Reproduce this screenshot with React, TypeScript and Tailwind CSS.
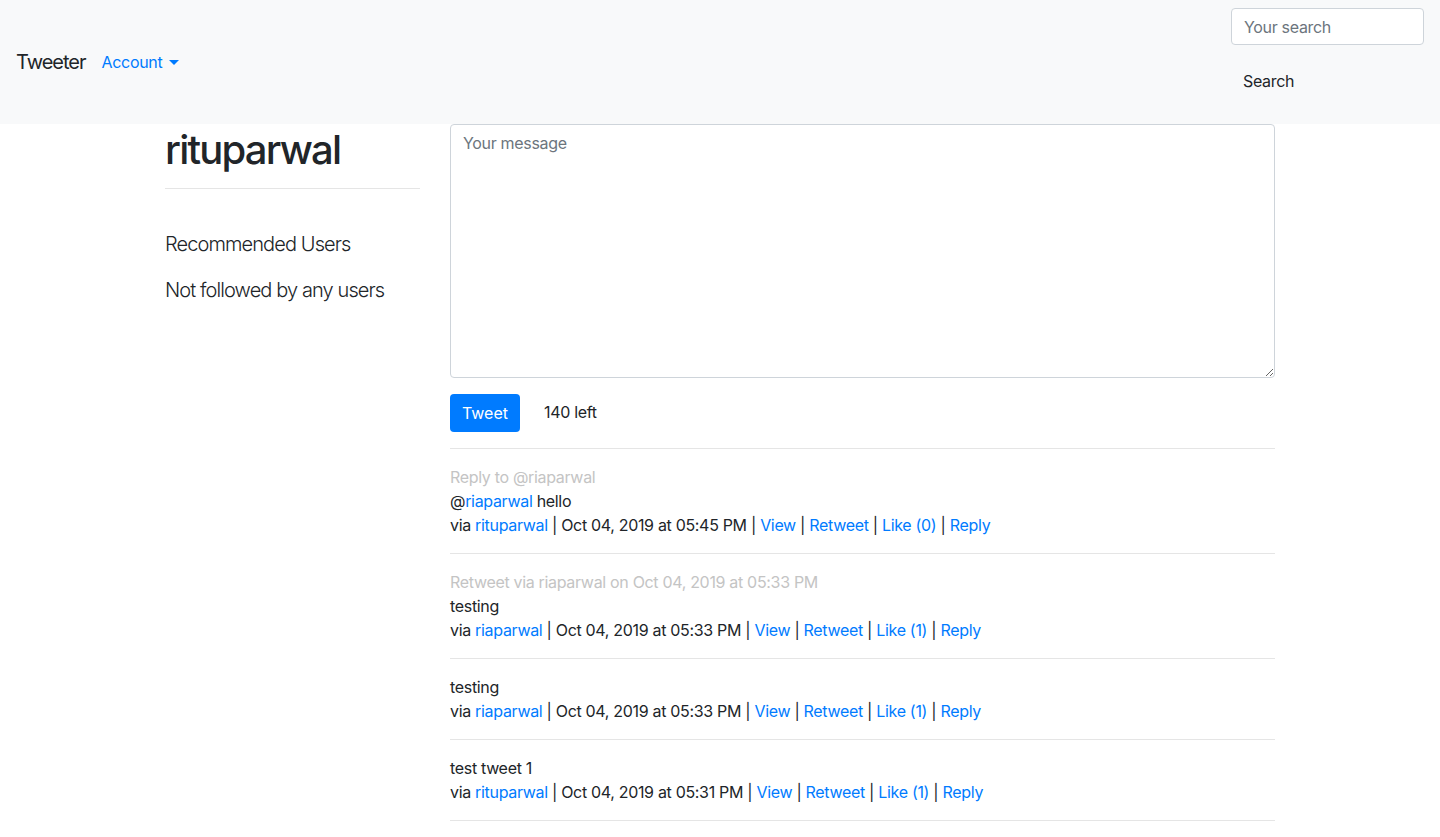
const tweets = [
  {
    note: 'Reply to @riaparwal',
    mention: 'riaparwal',
    body: ' hello',
    user: 'rituparwal',
    date: 'Oct 04, 2019 at 05:45 PM',
    likes: 0,
  },
  {
    note: 'Retweet via riaparwal on Oct 04, 2019 at 05:33 PM',
    body: 'testing',
    user: 'riaparwal',
    date: 'Oct 04, 2019 at 05:33 PM',
    likes: 1,
  },
  { body: 'testing', user: 'riaparwal', date: 'Oct 04, 2019 at 05:33 PM', likes: 1 },
  { body: 'test tweet 1', user: 'rituparwal', date: 'Oct 04, 2019 at 05:31 PM', likes: 1 },
];

const Link = ({ children }: { children: React.ReactNode }) => (
  <a href="#" className="text-[#007bff] hover:underline">
    {children}
  </a>
);

export default function App() {
  return (
    <div
      className="min-h-screen bg-white text-[#212529] text-base leading-6 tracking-[-0.02em]"
      style={{ fontFamily: 'Inter, "Liberation Sans", sans-serif' }}
    >
      <nav className="h-[124px] bg-[#f8f9fa] px-4 flex items-center justify-between">
        <div className="flex items-center">
          <a href="#" className="text-[20px] leading-[30px] mr-4 text-[#212529] tracking-[-0.05em]">
            Tweeter
          </a>
          <a href="#" className="text-[#007bff] flex items-center gap-[7px]">
            Account
            <span className="inline-block w-0 h-0 border-l-[5px] border-r-[5px] border-t-[5px] border-l-transparent border-r-transparent border-t-[#007bff]" />
          </a>
        </div>
        <form className="flex flex-col self-start pt-2">
          <input
            placeholder="Your search"
            className="w-[193px] h-[37px] px-3 rounded border border-[#ced4da] bg-white placeholder:text-[#6c757d] outline-none"
          />
          <button type="button" className="text-left px-3 h-[38px] mt-[17px]">
            Search
          </button>
        </form>
      </nav>

      <div className="w-[1140px] mx-auto px-[15px] flex">
        <aside className="w-[255px] shrink-0">
          <h1 className="text-[40px] font-medium leading-[48px] mt-[2px] tracking-[-0.045em]">rituparwal</h1>
          <hr className="border-t border-[#e5e5e5] mt-[14px] mb-[40px]" />
          <p className="text-[20px] font-light leading-[30px] mb-4 tracking-[-0.045em]">Recommended Users</p>
          <p className="text-[20px] font-light leading-[30px] tracking-[-0.045em]">Not followed by any users</p>
        </aside>

        <main className="ml-[30px] w-[825px]">
          <textarea
            placeholder="Your message"
            className="block w-full h-[254px] px-3 py-[6px] rounded border border-[#ced4da] placeholder:text-[#6c757d] outline-none resize-y"
          />
          <div className="flex items-center mt-4">
            <button type="button" className="bg-[#007bff] text-white rounded h-[38px] w-[70px] tracking-normal">
              Tweet
            </button>
            <span className="ml-6 -mt-[3px]">140 left</span>
          </div>
          <hr className="border-t border-[#e5e5e5] mt-4" />
          {tweets.map((t, i) => (
            <div key={i}>
              <div className="py-4">
                {t.note && <div className="text-[#c4c4c4]">{t.note}</div>}
                <div>
                  {t.mention && (
                    <>
                      @<Link>{t.mention}</Link>
                    </>
                  )}
                  {t.body}
                </div>
                <div>
                  via <Link>{t.user}</Link> | {t.date} | <Link>View</Link> | <Link>Retweet</Link> |{' '}
                  <Link>Like ({t.likes})</Link> | <Link>Reply</Link>
                </div>
              </div>
              <hr className="border-t border-[#e5e5e5]" />
            </div>
          ))}
        </main>
      </div>
    </div>
  );
}
